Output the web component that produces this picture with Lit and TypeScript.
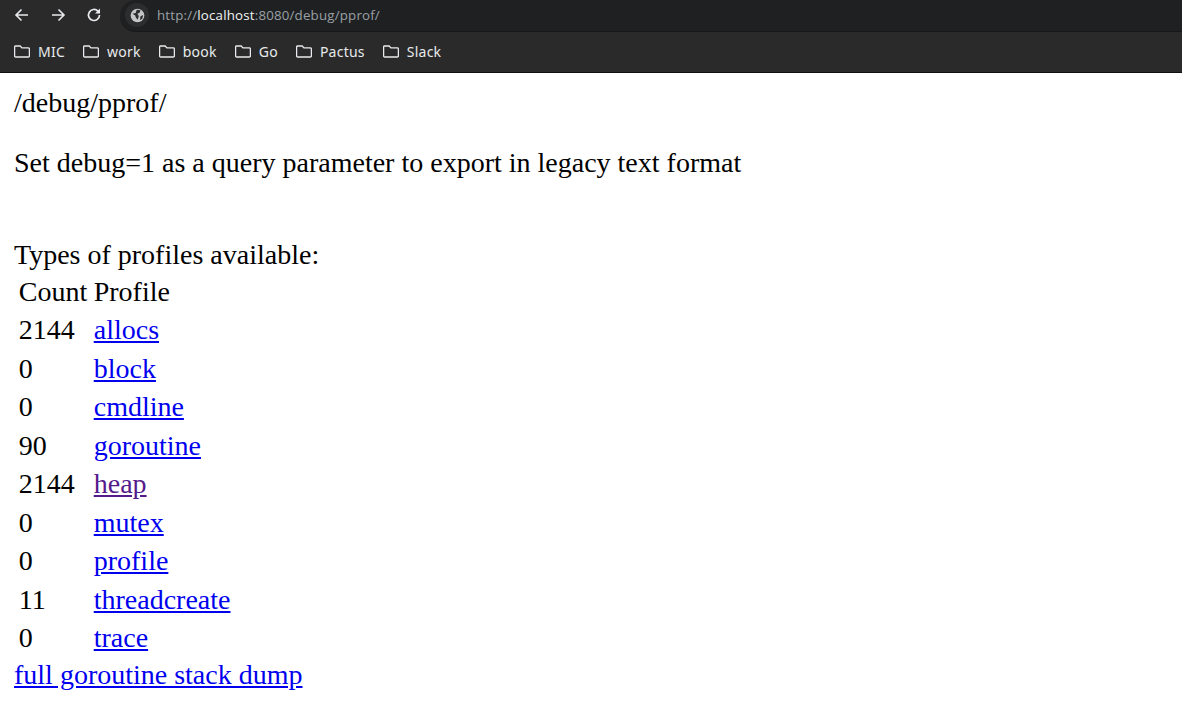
import { LitElement, html, css, svg } from "lit";
import { customElement } from "lit/decorators.js";

const rows: [string, string, boolean?][] = [
  ["2144", "allocs"],
  ["0", "block"],
  ["0", "cmdline"],
  ["90", "goroutine"],
  ["2144", "heap", true],
  ["0", "mutex"],
  ["0", "profile"],
  ["11", "threadcreate"],
  ["0", "trace"],
];
const folder = svg`<path d="M1.600 1h4.600l1.700 1.900h6.500q1 0 1 1v7.100q0 1-1 1H1.600q-1 0-1-1V2q0-1 1-1z" fill="none" stroke="#e8eaed" stroke-width="1.3"/>`;
const marks = ["MIC", "work", "book", "Go", "Pactus", "Slack"];

@customElement("app-root")
export class AppRoot extends LitElement {
  static styles = css`
    :host { display: block; background: #fff; min-height: 705px; }
    .toolbar { height: 32px; background: #2a2a2a; display: flex; align-items: flex-start; padding-left: 13px; box-sizing: border-box; }
    .nav { width: 18px; height: 18px; margin: 6px 18px 0 0; display: block; }
    .nav.last { margin-right: 17px; }
    .omni { flex: 1; height: 32px; box-sizing: border-box; background: #1f2022; border-bottom: 1px solid #17181a; border-radius: 16px 0 0 16px; display: flex; align-items: center; padding: 0 0 1px 5px; font: 14px "Open Sans", "Noto Sans", sans-serif; color: #9aa0a6; }
    .chip { width: 24px; height: 24px; border-radius: 50%; background: #2c2d2f; display: flex; align-items: center; justify-content: center; margin-right: 8px; }
    .chip svg { width: 15px; height: 15px; display: block; }
    .omni b { font-weight: 400; color: #f1f3f4; }
    .omni span { font-size: 13.3px; letter-spacing: 0.187px; margin-bottom: 1px; }
    .bar { height: 41px; background: #2a2a2a; border-bottom: 1px solid #111; box-sizing: border-box; display: flex; align-items: center; padding: 0 0 1px 14px; gap: 18px; color: #e8eaed; font: 14px "Noto Sans", "Open Sans", sans-serif; letter-spacing: 0.24px; }
    .mark { display: flex; align-items: center; gap: 8px; }
    .mark svg { width: 16px; height: 13px; display: block; }
    main { font: 28px/32px "Liberation Serif", "Times New Roman", serif; color: #000; padding: 14px 14px 0; }
    p { margin: 28px 0; }
    table { border-spacing: 3px; border-collapse: separate; margin: 0; }
    th, td { padding: 1.75px; font-weight: 400; text-align: left; line-height: 32px; }
    a { color: #00e; text-decoration: underline; }
    a.seen { color: #551a8b; }
  `;
  render() {
    return html`
      <div class="toolbar">
        <svg class="nav" viewBox="0 0 18 18" fill="none" stroke="#e8eaed" stroke-width="1.6"><path d="M15 9H3.500M8.500 3.500 3 9l5.500 5.500"/></svg>
        <svg class="nav" viewBox="0 0 18 18" fill="none" stroke="#e8eaed" stroke-width="1.6"><path d="M3 9h11.500M9.500 3.500 15 9l-5.500 5.500"/></svg>
        <svg class="nav last" viewBox="0 0 18 18" fill="none" stroke="#e8eaed" stroke-width="1.7"><path d="M14.500 9a5.500 5.500 0 1 1-1.600-3.900L14.500 6.500"/><path d="M15 2.500V7.500H10" fill="#e8eaed" stroke="none"/></svg>
        <div class="omni">
          <div class="chip"><svg viewBox="0 0 16 16"><circle cx="8" cy="8" r="7.300" fill="#c4c7c5"/><path d="M2.600 6 6 5.200l1.200-3.400 4 .6-1 2.600-2.400 1 1.600 2.600-1.200 3.800-2-2.200L5.600 8zM11 9l3-1.500-.8 3.600-2.400 2z" fill="#2c2d2f"/></svg></div>
          <span>http://<b>localhost</b>:8080/debug/pprof/</span>
        </div>
      </div>
      <div class="bar">
        ${marks.map((m) => html`<div class="mark"><svg viewBox="0 0 16 13">${folder}</svg><span>${m}</span></div>`)}
      </div>
      <main>
        /debug/pprof/
        <p>Set debug=1 as a query parameter to export in legacy text format</p>
        <br />
        Types of profiles available:
        <table>
          <thead><tr><th>Count</th><th>Profile</th></tr></thead>
          <tbody>
            ${rows.map(([c, n, seen]) => html`<tr><td>${c}</td><td><a class=${seen ? "seen" : ""} href="#">${n}</a></td></tr>`)}
          </tbody>
        </table>
        <a href="#">full goroutine stack dump</a>
      </main>
    `;
  }
}
